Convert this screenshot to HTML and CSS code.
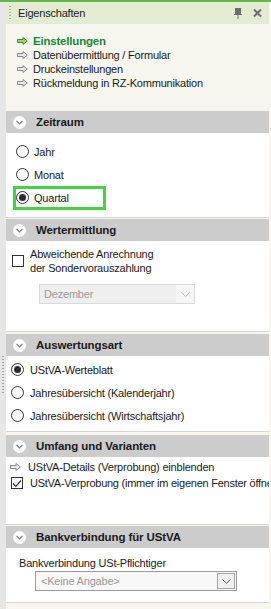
FILE: index.html
```html
<!DOCTYPE html>
<html lang="de">
<head>
<meta charset="utf-8">
<title>Eigenschaften</title>
<link rel="stylesheet" href="styles.css">
</head>
<body>
<div class="window">
  <div class="strip"><span class="strip-grip"></span></div>
  <div class="panel">
    <div class="titlebar">
      <span class="grip"></span>
      <span class="title">Eigenschaften</span>
      <svg class="pin" width="8" height="11" viewBox="0 0 8 11"><rect x="1" y="0" width="6" height="6" fill="#6d6d6d"/><rect x="0" y="6" width="8" height="1" fill="#6d6d6d"/><rect x="3.5" y="7" width="1" height="4" fill="#6d6d6d"/></svg>
      <svg class="close" width="9" height="8" viewBox="0 0 9 8"><path d="M1 0.5 L8 7.5 M8 0.5 L1 7.5" stroke="#6d6d6d" stroke-width="2"/></svg>
    </div>

    <div class="links">
      <div class="link active"><svg class="arrow" width="11" height="8" viewBox="0 0 11 8"><path d="M0.5 2.5 H6 V0.5 L10.3 4 L6 7.5 V5.5 H0.5 Z" fill="#9fd26a" stroke="#3f8f2c" stroke-width="1"/></svg>Einstellungen</div>
      <div class="link"><svg class="arrow" width="11" height="8" viewBox="0 0 11 8"><path d="M0.5 2.5 H6 V0.5 L10.3 4 L6 7.5 V5.5 H0.5 Z" fill="#e8e8e8" stroke="#8a8a8a" stroke-width="1"/></svg>Datenübermittlung / Formular</div>
      <div class="link"><svg class="arrow" width="11" height="8" viewBox="0 0 11 8"><path d="M0.5 2.5 H6 V0.5 L10.3 4 L6 7.5 V5.5 H0.5 Z" fill="#e8e8e8" stroke="#8a8a8a" stroke-width="1"/></svg>Druckeinstellungen</div>
      <div class="link"><svg class="arrow" width="11" height="8" viewBox="0 0 11 8"><path d="M0.5 2.5 H6 V0.5 L10.3 4 L6 7.5 V5.5 H0.5 Z" fill="#e8e8e8" stroke="#8a8a8a" stroke-width="1"/></svg>Rückmeldung in RZ-Kommunikation</div>
    </div>

    <section class="group g-zeit">
      <div class="group-head"><span class="chev"><svg width="7" height="5" viewBox="0 0 7 5"><path d="M0.5 0.8 L3.5 3.8 L6.5 0.8" fill="none" stroke="#777" stroke-width="1.2"/></svg></span>Zeitraum</div>
      <div class="group-body">
        <div class="row r23 ind10"><span class="opt"><span class="radio"></span>Jahr</span></div>
        <div class="row r23 ind10"><span class="opt"><span class="radio"></span>Monat</span></div>
        <div class="row r23 ind10"><span class="opt highlight"><span class="radio on"></span>Quartal</span></div>
      </div>
    </section>

    <section class="group g-wert">
      <div class="group-head"><span class="chev"><svg width="7" height="5" viewBox="0 0 7 5"><path d="M0.5 0.8 L3.5 3.8 L6.5 0.8" fill="none" stroke="#777" stroke-width="1.2"/></svg></span>Wertermittlung</div>
      <div class="group-body">
        <div class="check-row">
          <span class="checkbox"></span>
          <span class="check-text">Abweichende Anrechnung<br>der Sondervorauszahlung</span>
        </div>
        <div class="select disabled"><span class="select-text">Dezember</span><span class="select-btn"><svg width="9" height="5" viewBox="0 0 9 5"><path d="M0.5 0.5 L4.5 4.3 L8.5 0.5" fill="none" stroke="#b5b5b5" stroke-width="1"/></svg></span></div>
      </div>
    </section>

    <section class="group g-ausw">
      <div class="group-head"><span class="chev"><svg width="7" height="5" viewBox="0 0 7 5"><path d="M0.5 0.8 L3.5 3.8 L6.5 0.8" fill="none" stroke="#777" stroke-width="1.2"/></svg></span>Auswertungsart</div>
      <div class="group-body">
        <div class="row r23 ind5"><span class="opt wide"><span class="radio on"></span>UStVA-Werteblatt</span></div>
        <div class="row r23 ind5"><span class="opt wide"><span class="radio"></span>Jahresübersicht (Kalenderjahr)</span></div>
        <div class="row r23 ind5"><span class="opt wide"><span class="radio"></span>Jahresübersicht (Wirtschaftsjahr)</span></div>
      </div>
    </section>

    <section class="group g-umfang">
      <div class="group-head"><span class="chev"><svg width="7" height="5" viewBox="0 0 7 5"><path d="M0.5 0.8 L3.5 3.8 L6.5 0.8" fill="none" stroke="#777" stroke-width="1.2"/></svg></span>Umfang und Varianten</div>
      <div class="group-body">
        <div class="row r16 ind4"><svg class="arrow" width="11" height="8" viewBox="0 0 11 8"><path d="M0.5 2.5 H6 V0.5 L10.3 4 L6 7.5 V5.5 H0.5 Z" fill="#e8e8e8" stroke="#8a8a8a" stroke-width="1"/></svg><span class="nowrap">UStVA-Details (Verprobung) einblenden</span></div>
        <div class="row r16 ind5"><span class="checkbox checked"><svg width="10" height="9" viewBox="0 0 10 9"><path d="M1 4.5 L3.8 7.3 L9 1.5" fill="none" stroke="#333" stroke-width="1.2"/></svg></span><span class="nowrap gap8">UStVA-Verprobung (immer im eigenen Fenster öffnen)</span></div>
      </div>
    </section>

    <section class="group g-bank">
      <div class="group-head"><span class="chev"><svg width="7" height="5" viewBox="0 0 7 5"><path d="M0.5 0.8 L3.5 3.8 L6.5 0.8" fill="none" stroke="#777" stroke-width="1.2"/></svg></span>Bankverbindung für UStVA</div>
      <div class="group-body">
        <div class="bank-label">Bankverbindung USt-Pflichtiger</div>
        <div class="select combo"><span class="select-text">&lt;Keine Angabe&gt;</span><span class="select-btn"><svg width="9" height="5" viewBox="0 0 9 5"><path d="M0.5 0.5 L4.5 4.3 L8.5 0.5" fill="none" stroke="#555" stroke-width="1"/></svg></span></div>
      </div>
    </section>
  </div>
  <div class="edge"></div>
</div>
</body>
</html>
```

FILE: styles.css
```css
* { box-sizing: border-box; }
html, body { margin: 0; padding: 0; }
body {
  font-family: "Liberation Sans", Arial, sans-serif;
  font-size: 11px;
  letter-spacing: -0.2px;
  color: #1a1a22;
  background: #f6f6ee;
}
.window {
  width: 271px;
  height: 609px;
  border-top: 2px solid #5fba47;
  display: grid;
  grid-template-columns: 6px 263px 2px;
  overflow: hidden;
}
.strip {
  background: #e6e6e6;
  display: flex;
  flex-direction: column;
  align-items: center;
}
.strip-grip {
  margin-top: 354px;
  width: 2px;
  height: 38px;
  background: repeating-linear-gradient(to bottom, #a0a0a0 0 1px, transparent 1px 3px);
}
.edge { background: #f6f6ee; }
.panel {
  background: #f6f6ee;
  display: flex;
  flex-direction: column;
}
.titlebar {
  height: 22px;
  background: #e3ecd2;
  display: flex;
  align-items: center;
  padding: 0 7px 0 3px;
}
.grip {
  width: 2px;
  height: 14px;
  background: repeating-linear-gradient(to bottom, #a9b0a0 0 1px, transparent 1px 3px);
}
.title {
  margin-left: 7px;
  flex: 1;
  font-size: 11px;
  color: #222;
}
.pin { margin-top: 1px; }
.close { margin-left: 11px; }

.links {
  height: 87px;
  padding: 10px 0 0 11px;
}
.link {
  height: 14px;
  line-height: 14px;
  display: flex;
  align-items: center;
  color: #1a1a22;
}
.link .arrow { margin-right: 5px; flex: none; }
.link.active {
  color: #17873a;
  font-weight: bold;
  font-size: 11.5px;
}

.group {
  border-bottom: 1px solid #d6d6d6;
}
.group-head {
  height: 22px;
  background: #cccccc;
  display: flex;
  align-items: center;
  padding-left: 7px;
  font-weight: bold;
  font-size: 11.5px;
  color: #1a1a1a;
  letter-spacing: -0.1px;
}
.chev {
  width: 13px;
  height: 13px;
  border-radius: 50%;
  background: #ffffff;
  display: flex;
  align-items: center;
  justify-content: center;
  margin-right: 10px;
  padding-top: 1px;
}
.group-body {
  background: #ffffff;
}
.g-zeit { margin-bottom: 1px; }
.g-zeit .group-body { height: 84px; padding-top: 7px; }
.g-wert { margin-bottom: 2px; }
.g-wert .group-body { height: 90px; padding: 6px 0 0 6px; }
.g-ausw { margin-bottom: 3px; }
.g-ausw .group-body { height: 75px; padding-top: 2px; }
.g-umfang { margin-bottom: 1px; }
.g-umfang .group-body { height: 67px; padding-top: 2px; overflow: hidden; }
.g-bank .group-body { height: 54px; padding-top: 7px; }

.row {
  display: flex;
  align-items: center;
}
.r23 { height: 23px; }
.r16 { height: 16px; }
.ind10 { padding-left: 10px; }
.ind5 { padding-left: 5px; }
.ind4 { padding-left: 4px; }

.opt {
  display: inline-flex;
  align-items: center;
  gap: 5px;
  height: 18px;
}
.opt.wide { gap: 6px; }
.opt.highlight {
  width: 87px;
  box-shadow: 0 0 0 3px #47d147;
}
.radio {
  width: 13px;
  height: 13px;
  border: 1px solid #333;
  border-radius: 50%;
  background: #fff;
  display: flex;
  align-items: center;
  justify-content: center;
  flex: none;
}
.radio.on::after {
  content: "";
  width: 7px;
  height: 7px;
  border-radius: 50%;
  background: #2b2b2b;
}

.check-row {
  display: flex;
  align-items: center;
}
.checkbox {
  width: 12px;
  height: 12px;
  border: 1px solid #333;
  background: #fff;
  flex: none;
  display: flex;
  align-items: center;
  justify-content: center;
}
.check-text {
  margin-left: 6px;
  line-height: 14px;
}
.row .arrow { margin-right: 7px; flex: none; }
.nowrap { white-space: nowrap; }
.gap8 { margin-left: 7px; letter-spacing: -0.25px; }

.select {
  display: flex;
  align-items: stretch;
  height: 20px;
}
.select.disabled {
  margin: 9px 0 0 27px;
  width: 156px;
  background: #efefef;
  border: 1px solid #dadada;
  color: #9a9a9a;
}
.select.disabled .select-btn {
  width: 18px;
  background: #f6f6f6;
}
.select-text {
  flex: 1;
  padding-left: 4px;
  display: flex;
  align-items: center;
}
.select-btn {
  display: flex;
  align-items: center;
  justify-content: center;
}
.bank-label {
  padding-left: 13px;
  height: 16px;
  line-height: 16px;
}
.select.combo {
  margin-left: 29px;
  width: 202px;
  border: 1px solid #9b9b9b;
  background: #f8f8f8;
  color: #9a9a9a;
  padding: 1px;
}
.select.combo .select-btn {
  width: 18px;
  border: 1px solid #a5a5a5;
  background: #f0f0f0;
}
```
